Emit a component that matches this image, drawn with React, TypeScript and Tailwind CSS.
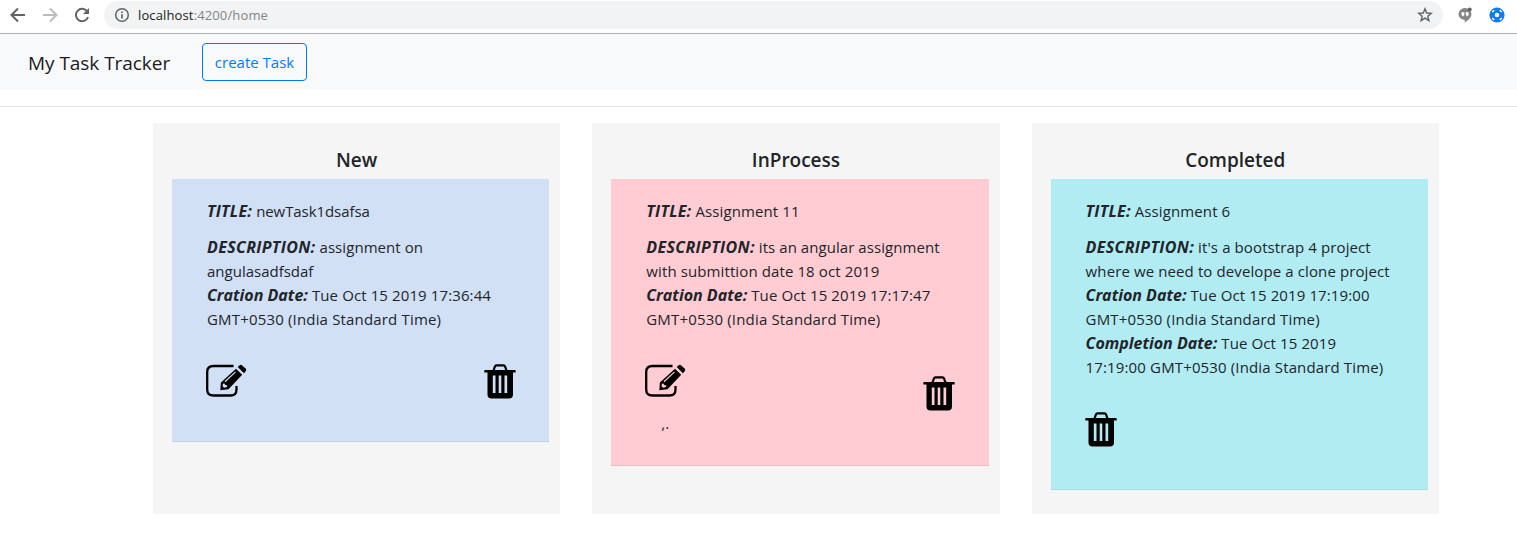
import React from 'react';

type Line = { label?: string; text?: string; spacing?: string; labelSpacing?: string };

function EditIcon({ shine }: { shine: string }) {
  return (
    <svg width="42" height="35" viewBox="0 1 42 35" className={`block ${shine}`}>
      <path d="M28.500 3H8.500Q2.200 3 2.200 9V26.500Q2.200 32.500 8.500 32.500H25.500Q31.500 32.500 31.500 26.500V23" fill="none" stroke="#000" strokeWidth="2.300" />
      <path d="M32.700 4 L34.900 2.200 Q36 1.400 37.200 2.400 L40.600 5.600 Q41.700 6.700 40.900 7.900 L38.900 10.200Z" />
      <path d="M31 5.700 L37.200 11.800 L23.500 26.200 L15.300 27.200 L15.900 19.600Z" />
      <path d="M20 18.800 L30.500 8.900" stroke="currentColor" strokeWidth="1.200" />
      <path d="M17.900 20.800 L19.400 20.600 L20.300 22 L22.300 22.600 L21.900 24.100 L19.200 24.700 L17.600 23.200Z" fill="currentColor" />
    </svg>
  );
}

function TrashIcon() {
  return (
    <svg width="32" height="35" viewBox="0 0 32 35" className="block">
      <path d="M9.500 6.500 L10.800 2.800 Q11.300 1.300 12.500 1.300H19.500Q20.700 1.300 21.200 2.800L22.500 6.500" fill="none" stroke="#000" strokeWidth="2.200" />
      <path fillRule="evenodd" d="M1 6H31Q31.700 6 31.700 7V8.500H29V30.500Q29 34.500 25 34.500H7.500Q3.500 34.500 3.500 30.500V8.500H.3V7Q.3 6 1 6ZM8.800 11.500V29H11.500V11.500ZM14.700 11.500V29H17.300V11.500ZM20.500 11.500V29H23.200V11.500Z" />
    </svg>
  );
}

function Text({ lines }: { lines: Line[] }) {
  return (
    <div>
      {lines.map((l, i) => (
        <p key={i} className={`flex h-6 items-baseline whitespace-nowrap text-[15px] leading-6 ${i === 0 ? 'mb-3' : ''}`}>
          {l.label && <b className={`mr-1 text-[16px] font-bold italic ${l.labelSpacing ?? ''}`}>{l.label}</b>}
          <span className={l.spacing ?? 'tracking-[0.11px]'}>{l.text}</span>
        </p>
      ))}
    </div>
  );
}

function Column({ title, card, lines, children }: { title: string; card: string; lines: Line[]; children: React.ReactNode }) {
  return (
    <section className="h-[391px] w-[407.3px] shrink-0 bg-[#f5f5f5] pr-[11px] pl-[19px] pt-[25px]">
      <h2 className="mr-2 mb-[7px] text-center text-[19px] leading-6 font-semibold">{title}</h2>
      <div className={`border-b px-[35px] pt-5 ${card}`}>
        <Text lines={lines} />
        {children}
      </div>
    </section>
  );
}

export default function App() {
  return (
    <div className="h-[557px] w-[1517px] overflow-hidden bg-white font-['Open_Sans',sans-serif] text-[#212529]">
      <div className="flex h-[34px] items-start border-b border-[#b0b0b3] bg-white">
        <svg width="104" height="30" viewBox="0 0 104 30" className="shrink-0" fill="none" stroke="#5f6368" strokeWidth="2">
          <path d="M25 15H12M18 8.500L11.500 15L18 21.500" />
          <path d="M43 15H56M50 8.500L56.500 15L50 21.500" stroke="#babcbe" />
          <path d="M87.200 11.500A6.200 6.200 0 1 0 88 17" />
          <path d="M89 8V14H83Z" fill="#5f6368" stroke="none" />
        </svg>
        <div className="mt-px flex h-7 w-[1339px] shrink-0 items-center rounded-full bg-[#f1f3f4] px-2.5">
          <svg width="16" height="16" viewBox="0 0 16 16" fill="none" stroke="#5f6368">
            <circle cx="8" cy="8" r="6.300" strokeWidth="1.500" />
            <path d="M8 7.200V11.500M8 4.500V6" strokeWidth="1.700" />
          </svg>
          <span className="mt-0.5 ml-2 text-[13px] tracking-[0.13px] text-[#202124]">localhost<span className="text-[#80868b]">:4200/home</span></span>
          <svg width="16" height="16" viewBox="0 0 16 16" className="ml-auto" fill="none" stroke="#5f6368" strokeWidth="1.400">
            <path d="M8 1.800L9.700 6L14.300 6.300L10.800 9.200L11.900 13.700L8 11.200L4.100 13.700L5.200 9.200L1.700 6.300L6.300 6Z" />
          </svg>
        </div>
        <svg width="74" height="30" viewBox="1443 0 74 30" className="shrink-0">
          <path d="M1465 8A6.300 6.300 0 0 0 1458.500 14.200Q1458.700 19 1464.700 20V22.500Q1471.500 18.500 1471.500 14A6.300 6.300 0 0 0 1465 8Z" fill="#858585" />
          <path d="M1461.500 12.300H1464.300V15L1463 16.300H1462V15H1461.500ZM1465.800 12.300H1468.600V15L1467.300 16.300H1466.300V15H1465.800Z" fill="white" />
          <circle cx="1469.700" cy="9.500" r="2" fill="#5f6368" />
          <circle cx="1497" cy="15" r="7.600" fill="#0c7cf2" />
          <circle cx="1497" cy="15" r="2.300" fill="white" />
          <path d="M1492.200 12L1494.200 10.300M1499.800 10.200L1501.800 12M1501.800 18L1499.800 19.800M1494.200 19.800L1492.200 18" stroke="white" strokeWidth="1.600" />
        </svg>
      </div>
      <nav className="flex h-14 items-center bg-[#f8f9fa] pl-7">
        <span className="mt-0.5 w-[174px] text-[19px] tracking-[-0.05px] whitespace-nowrap text-[#1c1c1c]">My Task Tracker</span>
        <button className="h-[38px] w-[105px] rounded border border-[#007bff] text-[15px] whitespace-nowrap text-[#007bff]">create Task</button>
      </nav>
      <hr className="mt-4 mb-4 border-[#e5e5e5]" />
      <main className="flex gap-8 pl-[153px]">
        <Column title="New" card="h-[263px] bg-[#d2e0f6] border-[#c3d1e6]" lines={[
          { label: 'TITLE:', text: 'newTask1dsafsa', labelSpacing: 'tracking-[0.25px]', spacing: 'tracking-[-0.07px]' },
          { label: 'DESCRIPTION:', text: 'assignment on', labelSpacing: 'tracking-[0.35px]', spacing: 'tracking-[0.06px]' },
          { text: 'angulasadfsdaf', spacing: 'tracking-[0px]' },
          { label: 'Cration Date:', text: 'Tue Oct 15 2019 17:36:44' },
          { text: 'GMT+0530 (India Standard Time)', spacing: 'tracking-[0.17px]' },
        ]}>
          <div className="mt-[33px] -mr-0.5 -ml-0.5 flex justify-between"><EditIcon shine="text-[#d2e0f6]" /><TrashIcon /></div>
        </Column>
        <Column title="InProcess" card="h-[287px] bg-[#ffccd3] border-[#edbfc5]" lines={[
          { label: 'TITLE:', text: 'Assignment 11', labelSpacing: 'tracking-[0.25px]' },
          { label: 'DESCRIPTION:', text: 'its an angular assignment', labelSpacing: 'tracking-[0.35px]', spacing: 'tracking-[0.06px]' },
          { text: 'with submittion date 18 oct 2019' },
          { label: 'Cration Date:', text: 'Tue Oct 15 2019 17:17:47' },
          { text: 'GMT+0530 (India Standard Time)', spacing: 'tracking-[0.17px]' },
        ]}>
          <div className="mt-[33px] -mr-px -ml-0.5 flex items-start justify-between"><EditIcon shine="text-[#ffccd3]" /><div className="mt-3"><TrashIcon /></div></div>
          <div className="pl-[15px] text-[15px] leading-6">,.</div>
        </Column>
        <Column title="Completed" card="h-[311px] bg-[#b2ecf3] border-[#a5dce3]" lines={[
          { label: 'TITLE:', text: 'Assignment 6', labelSpacing: 'tracking-[0.25px]' },
          { label: 'DESCRIPTION:', text: "it's a bootstrap 4 project", labelSpacing: 'tracking-[0.35px]' },
          { text: 'where we need to develope a clone project' },
          { label: 'Cration Date:', text: 'Tue Oct 15 2019 17:19:00' },
          { text: 'GMT+0530 (India Standard Time)', spacing: 'tracking-[0.17px]' },
          { label: 'Completion Date:', text: 'Tue Oct 15 2019' },
          { text: '17:19:00 GMT+0530 (India Standard Time)', spacing: 'tracking-[0.14px]' },
        ]}>
          <div className="mt-[33px] -ml-px"><TrashIcon /></div>
        </Column>
      </main>
    </div>
  );
}
